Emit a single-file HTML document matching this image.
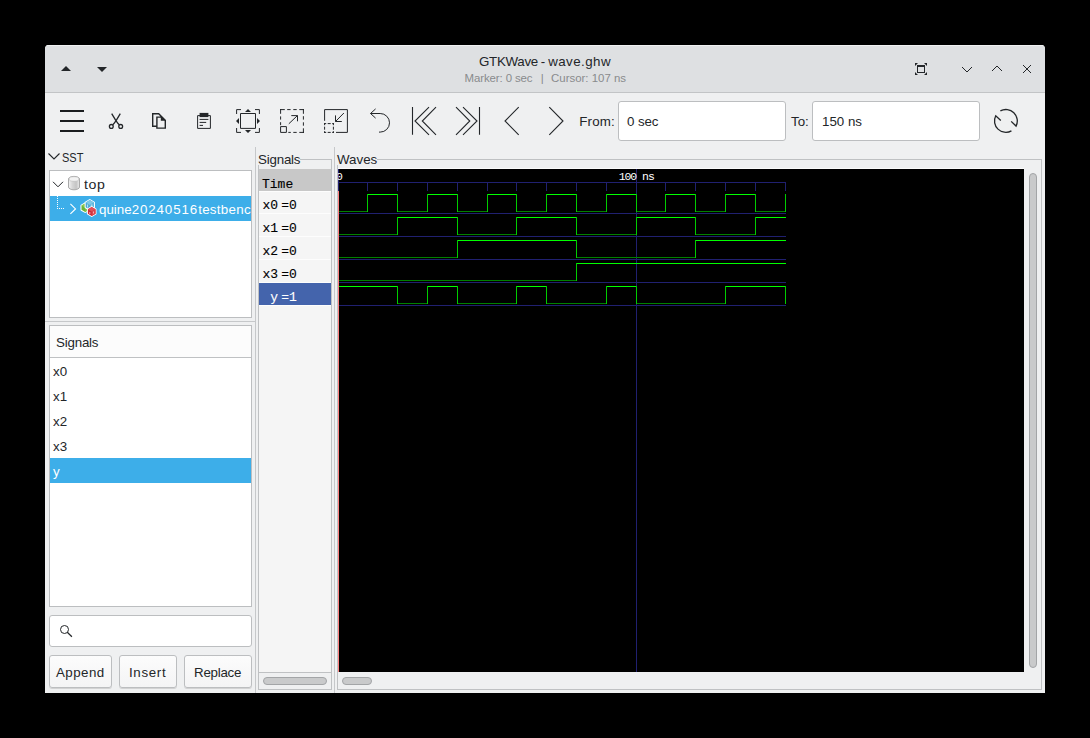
<!DOCTYPE html>
<html><head><meta charset="utf-8"><title>GTKWave - wave.ghw</title>
<style>
*{box-sizing:border-box;margin:0;padding:0}
html,body{width:1090px;height:738px;background:#000;overflow:hidden}
body{position:relative;font-family:"Liberation Sans",sans-serif;font-size:13.33px;color:#232629}
.a{position:absolute}
.t{position:absolute;white-space:nowrap;line-height:16px;height:16px}
#win{left:45px;top:45px;width:1000px;height:648px;background:#eff0f1;border-radius:4px 4px 0 0;overflow:hidden}
#tb{left:0;top:0;width:1000px;height:47px;background:#dee0e2;border-top:1px solid #f0f1f2}
#tbl{left:0;top:47px;width:1000px;height:1px;background:#c2c4c6}
.box{position:absolute;background:#fff;border:1px solid #bcbec0}
.entry{position:absolute;background:#fff;border:1px solid #bcbec0;border-radius:3px}
.btn{position:absolute;border:1px solid #bcbec0;border-radius:3px;background:linear-gradient(#fcfcfc,#f4f4f5);box-shadow:0 1px 0 rgba(0,0,0,.12)}
.sel{position:absolute;background:#3daee9}
.vsep{position:absolute;width:1px;background:#c6c8ca}
.ln{position:absolute;background:#bfc1c3}
.sb{position:absolute;background:#c9cacb;border:1px solid #a3a5a7;border-radius:4px}
.m{position:absolute;white-space:nowrap;font-family:"Liberation Mono",monospace;font-size:13px;line-height:16px;height:16px;color:#000;-webkit-text-stroke:.12px}
.wv{position:absolute;left:338px;top:169px;background:#000;overflow:hidden !important}
.wt{font-family:"Liberation Mono",monospace;font-size:11.5px;letter-spacing:-1.05px;fill:#fff}
svg{position:absolute;overflow:visible}
.ic{fill:none;stroke:#232629;stroke-width:1}
.n{left:248px;width:30px;text-align:right}.v{left:281.2px}
</style></head><body>
<div id="win" class="a">
<div id="tb" class="a"></div><div id="tbl" class="a"></div>
</div>

<!-- titlebar -->
<svg style="left:0;top:0" width="1090" height="100" viewBox="0 0 1090 100">
<path d="M61 71 L66 66 L71 71 Z" fill="#232629"/>
<path d="M97 67 L107 67 L102 72 Z" fill="#232629"/>
<!-- fullscreen -->
<path d="M917 65 H925 V72.900 H917 Z M918 67 V71.900 H924 V67 Z" fill="#232629" fill-rule="evenodd"/>
<path d="M915 63 h3 l-3 3z M927 63 h-3 l3 3z M915 75 h3 l-3 -3z M927 75 h-3 l3 -3z" fill="#232629"/>
<path d="M962 67 L967 72 L972 67" class="ic" stroke-width="1.25"/>
<path d="M992 71 L997 66 L1002 71" class="ic" stroke-width="1.25"/>
<path d="M1023 65 L1031 73 M1031 65 L1023 73" class="ic" stroke-width="1.3"/>
</svg>
<div class="t" id="title" style="left:479px;top:54px;width:131px;text-align:left;word-spacing:-.8px"><span style="letter-spacing:-.3px">GTKWave</span> - <span style="letter-spacing:.45px">wave.ghw</span></div>
<div class="t" id="sub" style="left:464.5px;top:70px;font-size:11.45px;color:#898b8d"><span style="letter-spacing:-.1px">Marker: 0 sec</span><span style="margin-left:8.2px">|</span><span style="margin-left:7.4px">Cursor: 107 ns</span></div>

<!-- toolbar -->
<svg style="left:0;top:100px" width="1090" height="46" viewBox="0 100 1090 46">
<g class="ic" stroke-width="1.2">
<!-- menu -->
<path d="M60 110.100 H84 V111.900 H60 Z M60 120.100 H84 V121.900 H60 Z M60 130.100 H84 V131.900 H60 Z" fill="#1b1e20" stroke="none"/>
<!-- cut -->
<path d="M111.700 113.600 L115.900 120.600 Q117.800 123.400 119.300 124.800 M120.300 113.600 L116.100 120.600 Q114.200 123.400 112.700 124.800" stroke-width="1.3"/>
<circle cx="111.300" cy="126.400" r="1.900" stroke-width="1.3"/><circle cx="120.700" cy="126.400" r="1.900" stroke-width="1.3"/>
<!-- copy -->
<path d="M156.900 126.200 H152.700 V113.700 H158.700 L165.300 120.300 V128.100 H156.900 V117.100 H161" stroke-width="1.4" stroke-linejoin="miter"/>
<path d="M160.800 115.800 V120.700 H165.700 Z" fill="#232629" stroke="none"/>
<!-- paste -->
<path d="M197.600 115.600 H210.400 V128.400 H197.600 Z"/>
<path d="M199.600 112.900 H208.400 V117.100 H199.600 Z" fill="#232629" stroke="none"/>
<path d="M199.600 119.400 H208.400 M199.600 122.400 H206.200 M199.600 125.400 H203" stroke-width="1"/>
<!-- zoom fit -->
<path d="M240.500 113.500 H255.500 V128.400 H240.500 Z"/>
<path d="M236.600 114 V109.600 H241 M255 109.600 H259.400 V114 M259.400 128 V132.400 H255 M241 132.400 H236.600 V128"/>
<path d="M245 112 L248 109 L251 112 Z M245 130 L248 133 L251 130 Z M239 118 L236 121 L239 124 Z M257 118 L260 121 L257 124 Z" fill="#232629" stroke="none"/>
<!-- zoom in -->
<path d="M280 109.600 H284.800 M287.200 109.600 H290.600 M293.300 109.600 H296.700 M299.300 109.600 H304 M303.400 109 V113.800 M303.400 116.200 V119.600 M303.400 122.300 V125.700 M303.400 128.300 V133 M304 132.400 H299.300 M296.700 132.400 H293.300 M290.800 132.400 H288.300 M280.600 109 V113.800 M280.600 116.400 V119.600 M280.600 122.200 V125.200"/>
<path d="M280.600 126.600 H286.400 V132.400 H280.600 Z"/>
<path d="M288.800 123.800 L297.400 115.600 M291.300 115.600 H297.500 V121.300"/>
<!-- zoom out -->
<path d="M324.600 120.800 V109.600 H347.400 V132.400 H336"/>
<path d="M324 123.600 H326.200 M327.700 123.600 H330.700 M332.200 123.600 H334 M324 132.400 H326.200 M327.700 132.400 H330.700 M332.200 132.400 H334 M324.600 123 V125.200 M324.600 126.700 V129.700 M324.600 131.200 V133 M333.400 123 V125.200 M333.400 126.700 V129.700 M333.400 131.200 V133"/>
<path d="M343.900 113 L335.500 121.500 M335.500 115.400 V121.500 H341.800"/>
<!-- undo -->
<path d="M375.600 108.900 L370.500 113.500 L375.600 118.100 M370.500 113.500 H380.200 A9.300 9.300 0 0 1 380.200 132.100 H379"/>
<!-- first -->
<path d="M412.500 107.100 V134.800 M429 107.100 L415 121 L429 134.800 M436 107.100 L422.300 121 L436 134.800" stroke-width="1.1"/>
<!-- last -->
<path d="M479.500 107.100 V134.800 M463 107.100 L477 121 L463 134.800 M456 107.100 L469.800 121 L456 134.800" stroke-width="1.1"/>
<!-- left / right -->
<path d="M518.700 107.100 L505 121 L518.700 134.800" stroke-width="1.1"/>
<path d="M549.300 107.100 L563 121 L549.300 134.800" stroke-width="1.1"/>
<!-- refresh -->
<path d="M1000.370 110.930 A11.400 11.400 0 0 1 1016.060 126.080 L1011.200 121.400" stroke-width="1.3"/>
<path d="M1011.430 130.870 A11.400 11.400 0 0 1 995.740 115.730 L1000.800 120.500" stroke-width="1.3"/>
</g></svg>
<div class="t" id="from" style="left:579.3px;top:114px;letter-spacing:.15px">From:</div>
<div class="entry" style="left:618px;top:101px;width:168px;height:40px"></div>
<div class="t" id="e1" style="left:627px;top:114px;letter-spacing:-.1px">0 sec</div>
<div class="t" id="to" style="left:791px;top:114px">To:</div>
<div class="entry" style="left:812px;top:101px;width:168px;height:40px"></div>
<div class="t" id="e2" style="left:822px;top:114px">150 ns</div>

<!-- pane separators -->
<div class="vsep" style="left:255px;top:147px;height:546px"></div>
<div class="vsep" style="left:334px;top:147px;height:546px"></div>

<!-- SST -->
<svg style="left:0;top:146px" width="260" height="80" viewBox="0 146 260 80"><g class="ic">
<path d="M48.5 153.5 L54 159 L59.5 153.5" stroke-width="1.1"/>
</g></svg>
<div class="t" id="sst" style="left:62px;top:150px;transform:scaleX(.825);transform-origin:0 0">SST</div>
<div class="box" style="left:49px;top:170px;width:203px;height:148px"></div>
<div class="sel" style="left:50px;top:196px;width:201px;height:25px"></div>
<svg style="left:0;top:170px" width="260" height="60" viewBox="0 170 260 60">
<defs><linearGradient id="cy" x1="0" x2="1" y1="0" y2="0"><stop offset="0" stop-color="#f4f4f4"/><stop offset=".35" stop-color="#d6d6d6"/><stop offset=".7" stop-color="#c4c4c4"/><stop offset="1" stop-color="#ececec"/></linearGradient></defs>
<path d="M53 181.800 L58 186.800 L63 181.800" class="ic" stroke-width="1.2"/>
<path d="M68.5 179 A5.5 2.6 0 0 1 79.500 179 V187 A5.5 2.8 0 0 1 68.5 187 Z" fill="url(#cy)" stroke="#a9a9a9" stroke-width="1"/>
<ellipse cx="74" cy="179" rx="5" ry="2.3" fill="#f3f3f3" stroke="#b8b8b8" stroke-width=".6"/>
<path d="M57.500 196 V209 M57 208.500 H64" fill="none" stroke="#fff" stroke-width="1" stroke-dasharray="1 1" shape-rendering="crispEdges"/>
<path d="M70.400 203.900 L75.500 208.900 L70.400 213.900" fill="none" stroke="#fff" stroke-width="1.15"/>
<!-- hex icon -->
<path d="M85.20 203.40 L88.92 205.55 L88.92 209.85 L85.20 212.00 L81.48 209.85 L81.48 205.55 Z" fill="#fff" stroke="#fff" stroke-width="2" stroke-linejoin="round"/><path d="M85.20 203.40 L88.92 205.55 L88.92 209.85 L85.20 212.00 L81.48 209.85 L81.48 205.55 Z" fill="#6cb436"/><path d="M85.20 203.40 L88.92 205.55 L85.20 207.70 L81.48 205.55 Z" fill="#8cc854"/><path d="M88.92 205.55 L88.92 209.85 L85.20 212.00 L85.20 207.70 Z" fill="#84c44c"/>
<path d="M89.80 200.10 L93.96 202.50 L93.96 207.30 L89.80 209.70 L85.64 207.30 L85.64 202.50 Z" fill="#fff" stroke="#fff" stroke-width="2" stroke-linejoin="round"/><path d="M89.80 200.10 L93.96 202.50 L93.96 207.30 L89.80 209.70 L85.64 207.30 L85.64 202.50 Z" fill="#4aa8d4"/><path d="M89.80 200.10 L93.96 202.50 L89.80 204.90 L85.64 202.50 Z" fill="#7cc8e6"/><path d="M93.96 202.50 L93.96 207.30 L89.80 209.70 L89.80 204.90 Z" fill="#62b8de"/>
<path d="M91.70 207.10 L95.51 209.30 L95.51 213.70 L91.70 215.90 L87.89 213.70 L87.89 209.30 Z" fill="#fff" stroke="#fff" stroke-width="2" stroke-linejoin="round"/><path d="M91.70 207.10 L95.51 209.30 L95.51 213.70 L91.70 215.90 L87.89 213.70 L87.89 209.30 Z" fill="#cc2c38"/><path d="M91.70 207.10 L95.51 209.30 L91.70 211.50 L87.89 209.30 Z" fill="#e0505a"/><path d="M95.51 209.30 L95.51 213.70 L91.70 215.90 L91.70 211.50 Z" fill="#dc444e"/>
<path d="M87.600 204.500 V207.500 M91.800 204.500 V207" stroke="#e4f4fa" stroke-width=".8" fill="none"/>
<path d="M89.800 212 V214 M93.500 211.500 V213.500" stroke="#f8c8cc" stroke-width=".8" fill="none"/>
</svg>
<div class="t" id="top" style="left:84px;top:177px;transform:scaleX(1.06);transform-origin:0 0;letter-spacing:.55px">top</div>
<div class="t" id="quine" style="left:99px;top:202px;color:#fff;width:152px;overflow:hidden">quine<span style="letter-spacing:.9px">20240516</span><span style="letter-spacing:.3px">testbench</span></div>

<!-- left pane horizontal separator -->
<div class="ln" style="left:45px;top:321px;width:210px;height:1px;background:#c6c8ca"></div>

<!-- signals list -->
<div class="box" style="left:49px;top:325px;width:203px;height:282px"></div>
<div class="a" style="left:50px;top:326px;width:201px;height:31px;background:#fcfcfc"></div>
<div class="ln" style="left:50px;top:357px;width:201px;height:1px"></div>
<div class="t" id="sigh" style="left:56px;top:335px;letter-spacing:-.2px">Signals</div>
<div class="t" id="s0" style="left:53px;top:364px">x0</div>
<div class="t" id="s1" style="left:53px;top:389px">x1</div>
<div class="t" id="s2" style="left:53px;top:414px">x2</div>
<div class="t" id="s3" style="left:53px;top:439px">x3</div>
<div class="sel" style="left:50px;top:458px;width:201px;height:25px"></div>
<div class="t" id="s4" style="left:53px;top:464px;color:#fff">y</div>

<!-- search -->
<div class="entry" style="left:49px;top:615px;width:203px;height:32px"></div>
<svg style="left:55px;top:620px" width="24" height="24" viewBox="55 620 24 24"><g class="ic" stroke-width="1.4"><circle cx="64.500" cy="629.500" r="4"/><path d="M67.300 632.300 L71.900 636.700" stroke-width="1.25"/></g></svg>

<!-- buttons -->
<div class="btn" style="left:49px;top:655px;width:63px;height:33px"></div>
<div class="btn" style="left:119px;top:655px;width:58px;height:33px"></div>
<div class="btn" style="left:184px;top:655px;width:68px;height:33px"></div>
<div class="t" id="b1" style="left:56px;top:665px;letter-spacing:.45px">Append</div>
<div class="t" id="b2" style="left:129px;top:665px;letter-spacing:.65px">Insert</div>
<div class="t" id="b3" style="left:194px;top:665px;letter-spacing:-.25px">Replace</div>

<!-- Signals frame -->
<div class="ln" style="left:300px;top:159px;width:32px;height:1px"></div>
<div class="ln" style="left:331px;top:159px;width:1px;height:531px"></div>
<div class="ln" style="left:258px;top:165px;width:1px;height:525px"></div>
<div class="ln" style="left:258px;top:689px;width:74px;height:1px"></div>
<div class="t" id="fl1" style="left:258px;top:152px;letter-spacing:-.2px">Signals</div>
<div class="a" style="left:259px;top:169px;width:72px;height:503px;background:#f5f5f5"></div>
<div class="a" style="left:259px;top:169px;width:72px;height:22px;background:#c8c8c8"></div>
<div class="a" style="left:259px;top:191px;width:72px;height:1px;background:#fdfdfd"></div>
<div class="a" style="left:259px;top:213px;width:72px;height:1px;background:#fdfdfd"></div>
<div class="a" style="left:259px;top:236px;width:72px;height:1px;background:#fdfdfd"></div>
<div class="a" style="left:259px;top:259px;width:72px;height:1px;background:#fdfdfd"></div>
<div class="a" style="left:259px;top:282px;width:72px;height:1px;background:#fdfdfd"></div>
<div class="a" style="left:259px;top:283px;width:72px;height:22px;background:#4464ac"></div>
<div class="a" style="left:259px;top:305px;width:72px;height:1px;background:#fdfdfd"></div>
<div class="ln" style="left:259px;top:672px;width:72px;height:1px"></div>
<div class="sb" style="left:263px;top:677px;width:64px;height:8px"></div>
<div class="m" id="m0" style="left:262px;top:177px;">Time</div>
<div class="m n" style="top:198px">x0</div><div class="m v" style="top:198px">=0</div>
<div class="m n" style="top:221px">x1</div><div class="m v" style="top:221px">=0</div>
<div class="m n" style="top:244px">x2</div><div class="m v" style="top:244px">=0</div>
<div class="m n" style="top:267px">x3</div><div class="m v" style="top:267px">=0</div>
<div class="m n" style="top:290px;color:#fff">y</div><div class="m v" style="top:290px;color:#fff">=1</div>

<!-- Waves frame -->
<div class="ln" style="left:377px;top:159px;width:665px;height:1px"></div>
<div class="ln" style="left:1041px;top:159px;width:1px;height:531px"></div>
<div class="ln" style="left:337px;top:165px;width:1px;height:525px"></div>
<div class="ln" style="left:337px;top:689px;width:705px;height:1px"></div>
<div class="t" id="fl2" style="left:337px;top:152px">Waves</div>
<div class="a" style="left:338px;top:168px;width:686px;height:1px;background:#fbfbfb"></div>
<svg class="wv" width="686" height="503" viewBox="0 0 686 503" shape-rendering="crispEdges"><rect x="0" y="13" width="448" height="1" fill="#202070"/><rect x="29" y="13" width="1" height="9" fill="#202070"/><rect x="59" y="13" width="1" height="9" fill="#202070"/><rect x="89" y="13" width="1" height="9" fill="#202070"/><rect x="119" y="13" width="1" height="9" fill="#202070"/><rect x="149" y="13" width="1" height="9" fill="#202070"/><rect x="178" y="13" width="1" height="9" fill="#202070"/><rect x="208" y="13" width="1" height="9" fill="#202070"/><rect x="238" y="13" width="1" height="9" fill="#202070"/><rect x="268" y="13" width="1" height="9" fill="#202070"/><rect x="298" y="13" width="1" height="9" fill="#202070"/><rect x="327" y="13" width="1" height="9" fill="#202070"/><rect x="357" y="13" width="1" height="9" fill="#202070"/><rect x="387" y="13" width="1" height="9" fill="#202070"/><rect x="417" y="13" width="1" height="9" fill="#202070"/><rect x="447" y="13" width="1" height="9" fill="#202070"/><rect x="0" y="44" width="448" height="1" fill="#202070"/><rect x="0" y="67" width="448" height="1" fill="#202070"/><rect x="0" y="90" width="448" height="1" fill="#202070"/><rect x="0" y="113" width="448" height="1" fill="#202070"/><rect x="0" y="136" width="448" height="1" fill="#202070"/><rect x="0" y="0" width="1" height="22" fill="#202070"/><rect x="298" y="0" width="1" height="503" fill="#202070"/><rect x="0" y="42" width="30" height="1" fill="#008000"/><rect x="29" y="25" width="31" height="1" fill="#00ff00"/><rect x="59" y="42" width="31" height="1" fill="#008000"/><rect x="89" y="25" width="31" height="1" fill="#00ff00"/><rect x="119" y="42" width="31" height="1" fill="#008000"/><rect x="149" y="25" width="30" height="1" fill="#00ff00"/><rect x="178" y="42" width="31" height="1" fill="#008000"/><rect x="208" y="25" width="31" height="1" fill="#00ff00"/><rect x="238" y="42" width="31" height="1" fill="#008000"/><rect x="268" y="25" width="31" height="1" fill="#00ff00"/><rect x="298" y="42" width="30" height="1" fill="#008000"/><rect x="327" y="25" width="31" height="1" fill="#00ff00"/><rect x="357" y="42" width="31" height="1" fill="#008000"/><rect x="387" y="25" width="31" height="1" fill="#00ff00"/><rect x="417" y="42" width="31" height="1" fill="#008000"/><rect x="29" y="25" width="1" height="18" fill="#00cc00"/><rect x="59" y="25" width="1" height="18" fill="#00cc00"/><rect x="89" y="25" width="1" height="18" fill="#00cc00"/><rect x="119" y="25" width="1" height="18" fill="#00cc00"/><rect x="149" y="25" width="1" height="18" fill="#00cc00"/><rect x="178" y="25" width="1" height="18" fill="#00cc00"/><rect x="208" y="25" width="1" height="18" fill="#00cc00"/><rect x="238" y="25" width="1" height="18" fill="#00cc00"/><rect x="268" y="25" width="1" height="18" fill="#00cc00"/><rect x="298" y="25" width="1" height="18" fill="#00cc00"/><rect x="327" y="25" width="1" height="18" fill="#00cc00"/><rect x="357" y="25" width="1" height="18" fill="#00cc00"/><rect x="387" y="25" width="1" height="18" fill="#00cc00"/><rect x="417" y="25" width="1" height="18" fill="#00cc00"/><rect x="447" y="25" width="1" height="18" fill="#00cc00"/><rect x="0" y="65" width="60" height="1" fill="#008000"/><rect x="59" y="48" width="61" height="1" fill="#00ff00"/><rect x="119" y="65" width="60" height="1" fill="#008000"/><rect x="178" y="48" width="61" height="1" fill="#00ff00"/><rect x="238" y="65" width="61" height="1" fill="#008000"/><rect x="298" y="48" width="60" height="1" fill="#00ff00"/><rect x="357" y="65" width="61" height="1" fill="#008000"/><rect x="417" y="48" width="31" height="1" fill="#00ff00"/><rect x="59" y="48" width="1" height="18" fill="#00cc00"/><rect x="119" y="48" width="1" height="18" fill="#00cc00"/><rect x="178" y="48" width="1" height="18" fill="#00cc00"/><rect x="238" y="48" width="1" height="18" fill="#00cc00"/><rect x="298" y="48" width="1" height="18" fill="#00cc00"/><rect x="357" y="48" width="1" height="18" fill="#00cc00"/><rect x="417" y="48" width="1" height="18" fill="#00cc00"/><rect x="0" y="88" width="120" height="1" fill="#008000"/><rect x="119" y="71" width="120" height="1" fill="#00ff00"/><rect x="238" y="88" width="120" height="1" fill="#008000"/><rect x="357" y="71" width="91" height="1" fill="#00ff00"/><rect x="119" y="71" width="1" height="18" fill="#00cc00"/><rect x="238" y="71" width="1" height="18" fill="#00cc00"/><rect x="357" y="71" width="1" height="18" fill="#00cc00"/><rect x="0" y="111" width="239" height="1" fill="#008000"/><rect x="238" y="94" width="210" height="1" fill="#00ff00"/><rect x="238" y="94" width="1" height="18" fill="#00cc00"/><rect x="0" y="117" width="60" height="1" fill="#00ff00"/><rect x="59" y="134" width="31" height="1" fill="#008000"/><rect x="89" y="117" width="31" height="1" fill="#00ff00"/><rect x="119" y="134" width="60" height="1" fill="#008000"/><rect x="178" y="117" width="31" height="1" fill="#00ff00"/><rect x="208" y="134" width="61" height="1" fill="#008000"/><rect x="268" y="117" width="31" height="1" fill="#00ff00"/><rect x="298" y="134" width="90" height="1" fill="#008000"/><rect x="387" y="117" width="61" height="1" fill="#00ff00"/><rect x="59" y="117" width="1" height="18" fill="#00cc00"/><rect x="89" y="117" width="1" height="18" fill="#00cc00"/><rect x="119" y="117" width="1" height="18" fill="#00cc00"/><rect x="178" y="117" width="1" height="18" fill="#00cc00"/><rect x="208" y="117" width="1" height="18" fill="#00cc00"/><rect x="268" y="117" width="1" height="18" fill="#00cc00"/><rect x="298" y="117" width="1" height="18" fill="#00cc00"/><rect x="387" y="117" width="1" height="18" fill="#00cc00"/><rect x="447" y="117" width="1" height="18" fill="#00cc00"/><rect x="0" y="22" width="1" height="481" fill="#ff8080"/><text x="0.8" y="11" text-anchor="middle" class="wt">0</text><text x="298.2" y="11" text-anchor="middle" class="wt">100 ns</text></svg>
<div class="sb" style="left:1029px;top:173px;width:8px;height:495px"></div>
<div class="sb" style="left:342px;top:677px;width:30px;height:8px"></div>
</body></html>
